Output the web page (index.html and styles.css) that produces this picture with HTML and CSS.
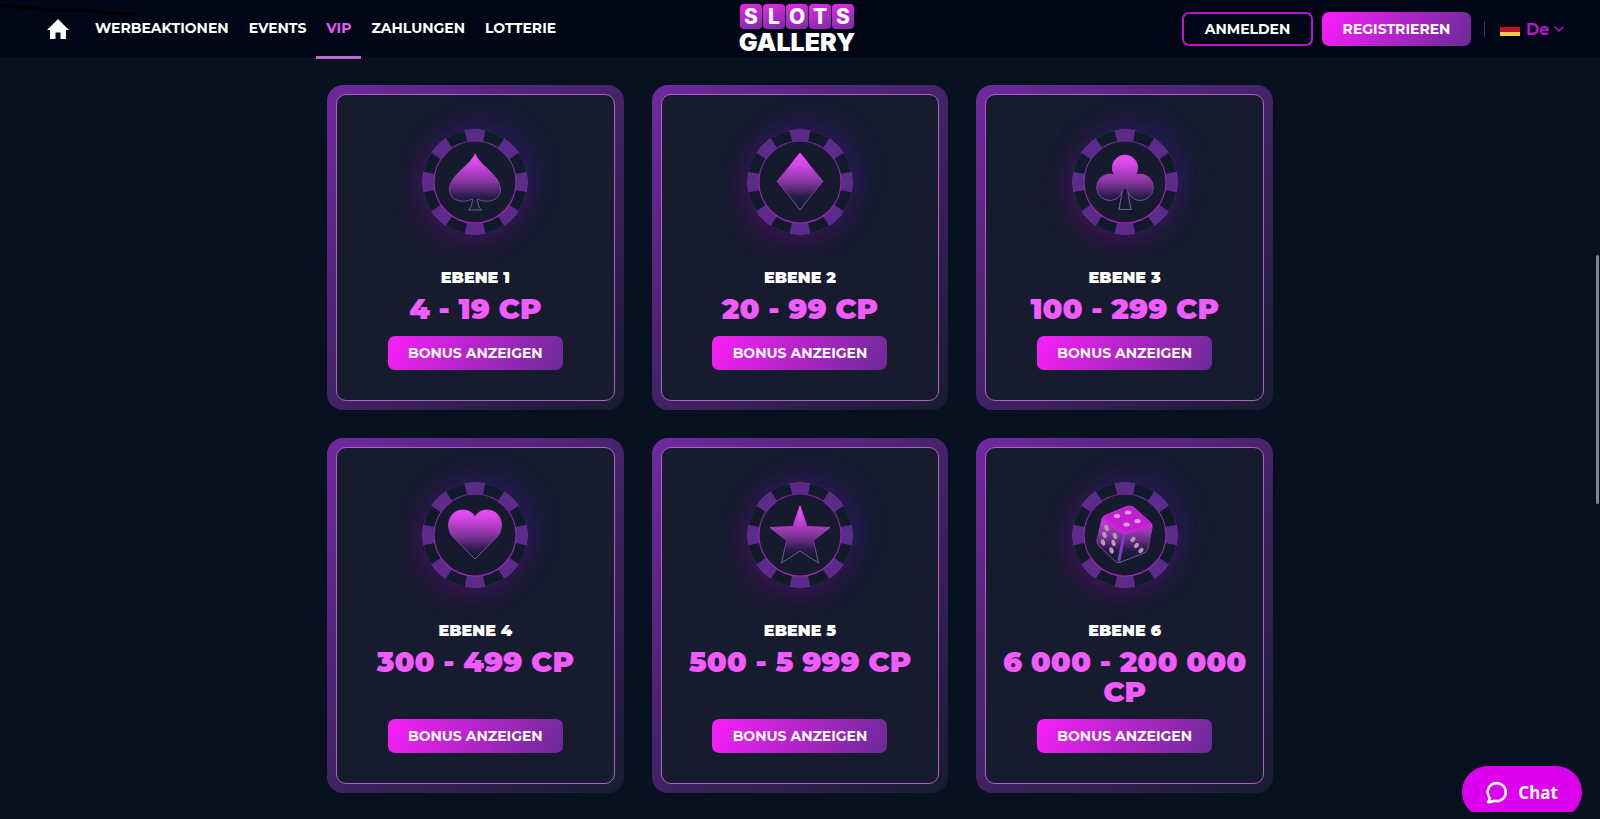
FILE: index.html
```
<!DOCTYPE html>
<html lang="de">
<head>
  <meta charset="UTF-8">
  <title>Slots Gallery - VIP</title>
  <meta name="viewport" content="width=device-width, initial-scale=1.0" />
  <link rel="stylesheet" href="styles.css">
</head>
<body>

  <!-- Shared SVG parts -->
  <svg class="sprite" aria-hidden="true">
    <defs>
      <linearGradient id="suit-fill" x1="0" y1="23" x2="0" y2="81" gradientUnits="userSpaceOnUse">
        <stop offset="0" stop-color="#f64dff" />
        <stop offset="0.2" stop-color="#d848e8" />
        <stop offset="0.5" stop-color="#8a36a3" />
        <stop offset="0.78" stop-color="#251b47" />
        <stop offset="0.9" stop-color="#161b2e" />
      </linearGradient>
      <linearGradient id="suit-line" x1="0" y1="23" x2="0" y2="81" gradientUnits="userSpaceOnUse">
        <stop offset="0" stop-color="#f04bff" />
        <stop offset="0.6" stop-color="#7a3a9c" />
        <stop offset="1" stop-color="#70609f" />
      </linearGradient>
      <linearGradient id="ring-line" x1="0" y1="12" x2="0" y2="94" gradientUnits="userSpaceOnUse">
        <stop offset="0" stop-color="#6a2a96" />
        <stop offset="1" stop-color="#b01fc0" />
      </linearGradient>
      <symbol id="chip" viewBox="0 0 106 106">
        <circle cx="53" cy="53" r="53" fill="#111a2b" />
        <circle cx="53" cy="53" r="47" fill="none" stroke="#5c2b8a" stroke-width="12" pathLength="16" stroke-dasharray="1 1" transform="rotate(-11.25 53 53)" />
        <circle cx="53" cy="53" r="52.5" fill="none" stroke="#6f3a9c" stroke-opacity="0.35" />
        <circle cx="53" cy="53" r="41" fill="#151b2d" stroke="url(#ring-line)" stroke-width="1.2" />
      </symbol>
    </defs>
  </svg>

  <header class="header">
    <svg class="header-mark" width="136" height="18" viewBox="0 0 136 18" aria-hidden="true">
      <path d="M0 3 C8 6 20 4 32 6 S60 9 78 8 S104 13 134 12" fill="none" stroke="#000" stroke-width="3" stroke-linecap="round" />
    </svg>

    <nav class="nav">
      <a href="#" class="nav-home" aria-label="Startseite">
        <svg width="22" height="20" viewBox="0 0 22 20"><path d="M11 0 L22 11 H19 V20 H13.500 V13.500 H8.500 V20 H3 V11 H0 Z" fill="#fff" /></svg>
      </a>
      <a href="#" class="nav-link">WERBEAKTIONEN</a>
      <a href="#" class="nav-link">EVENTS</a>
      <a href="#" class="nav-link active">VIP</a>
      <a href="#" class="nav-link">ZAHLUNGEN</a>
      <a href="#" class="nav-link">LOTTERIE</a>
    </nav>

    <a href="#" class="logo">
      <span class="logo-tiles"><span>S</span><span>L</span><span>O</span><span>T</span><span>S</span></span>
      <span class="logo-name">GALLERY</span>
    </a>

    <div class="account">
      <button type="button" class="button login-btn">ANMELDEN</button>
      <button type="button" class="button register-btn">REGISTRIEREN</button>
      <div class="language">
        <svg width="20" height="13" viewBox="0 0 20 13" aria-hidden="true">
          <rect width="20" height="5" fill="#0a0506" />
          <rect y="4" width="20" height="5" fill="#c8102a" />
          <rect y="9" width="20" height="4" fill="#f9c846" />
        </svg>
        <select class="language-select" aria-label="Sprache">
          <option>De</option>
        </select>
        <svg width="10" height="6" viewBox="0 0 10 6" aria-hidden="true"><path d="M0.500 0.500 L5 5 L9.500 0.500" fill="none" stroke="#b418c8" stroke-width="1.3" /></svg>
      </div>
    </div>
  </header>

  <main class="levels">
    <article class="card">
      <div class="card-body">
        <svg class="chip" viewBox="0 0 106 106" aria-hidden="true">
          <use href="#chip" />
          <path class="suit" d="M53 25 C57 36 78 46 78.500 60 C79 71 66 75 55.500 70 C55.500 75 57 79 59.500 81 H46.500 C49 79 50.500 75 50.500 70 C40 75 27 71 27.500 60 C28 46 49 36 53 25 Z" />
        </svg>
        <h3 class="card-level">EBENE 1</h3>
        <p class="card-points">4 - 19 CP</p>
        <button type="button" class="button bonus-btn">BONUS ANZEIGEN</button>
      </div>
    </article>

    <article class="card">
      <div class="card-body">
        <svg class="chip" viewBox="0 0 106 106" aria-hidden="true">
          <use href="#chip" />
          <path class="suit" d="M53 24 Q64 38 76 52.500 Q64 66 53 81 Q42 66 30 52.500 Q42 38 53 24 Z" />
        </svg>
        <h3 class="card-level">EBENE 2</h3>
        <p class="card-points">20 - 99 CP</p>
        <button type="button" class="button bonus-btn">BONUS ANZEIGEN</button>
      </div>
    </article>

    <article class="card">
      <div class="card-body">
        <svg class="chip" viewBox="0 0 106 106" aria-hidden="true">
          <use href="#chip" />
          <path class="suit" d="M42.500 46 A12.700 12.700 0 1 1 63.500 46 A13.200 13.200 0 1 1 55.500 62 L59 80.500 H47 L50.500 62 A13.200 13.200 0 1 1 42.500 46 Z" />
          <path class="suit stem" d="M51 59 H55 L59 80.500 H47 Z" />
        </svg>
        <h3 class="card-level">EBENE 3</h3>
        <p class="card-points">100 - 299 CP</p>
        <button type="button" class="button bonus-btn">BONUS ANZEIGEN</button>
      </div>
    </article>

    <article class="card">
      <div class="card-body">
        <svg class="chip" viewBox="0 0 106 106" aria-hidden="true">
          <use href="#chip" />
          <path class="suit" d="M53 35 C58 26 69 27 74 31 C81 37 81 48 75 55 L53 77 L31 55 C25 48 25 37 32 31 C37 27 48 26 53 35 Z" />
        </svg>
        <h3 class="card-level">EBENE 4</h3>
        <p class="card-points">300 - 499 CP</p>
        <button type="button" class="button bonus-btn">BONUS ANZEIGEN</button>
      </div>
    </article>

    <article class="card">
      <div class="card-body">
        <svg class="chip" viewBox="0 0 106 106" aria-hidden="true">
          <use href="#chip" />
          <path class="suit" d="M53 24 L60 44.500 L83 45.500 L66.500 58.500 L71.500 81 L53 69 L34.500 81 L39.500 58.500 L23 45.500 L46 44.500 Z" />
        </svg>
        <h3 class="card-level">EBENE 5</h3>
        <p class="card-points">500 - 5 999 CP</p>
        <button type="button" class="button bonus-btn">BONUS ANZEIGEN</button>
      </div>
    </article>

    <article class="card">
      <div class="card-body">
        <svg class="chip" viewBox="0 0 106 106" aria-hidden="true">
          <use href="#chip" />
          <path class="suit" d="M54 25 Q57 23 61 25 L77 39 Q81 42 80 46 L76 66 Q75 70 72 71 L49 80 Q46 82 43 79 L27 64 Q24 61 25 58 L30 37 Q31 34 34 33 Z" />
          <path d="M54 25 Q57 23 61 25 L77 39 Q80 42 77 43 L56 50 Q52 52 49 49 L32 38 Q29 35 34 33 Z" fill="#c31fce" />
          <path d="M31 37 L49 49 Q52 52 56 50 L79 43" fill="none" stroke="#c827d6" stroke-width="3" stroke-linejoin="round" />
          <path d="M52 53 L47 78" fill="none" stroke="#7a3fc4" stroke-width="3" stroke-linecap="round" />
          <g fill="#d9a2dc">
            <ellipse cx="45" cy="34" rx="3.200" ry="2" />
            <ellipse cx="56" cy="30.500" rx="3.200" ry="2" />
            <ellipse cx="65.500" cy="39" rx="3.200" ry="2" />
            <ellipse cx="54.500" cy="42.500" rx="3.200" ry="2" />
          </g>
          <g fill="#b79bbf">
            <ellipse cx="34.500" cy="46" rx="2" ry="3.200" transform="rotate(-20 34.500 46)" />
            <ellipse cx="32.500" cy="53" rx="2" ry="3.200" transform="rotate(-20 32.500 53)" />
            <ellipse cx="31" cy="60.500" rx="2" ry="3.200" transform="rotate(-20 31 60.500)" />
            <ellipse cx="43" cy="54" rx="2" ry="3.200" transform="rotate(-20 43 54)" />
            <ellipse cx="41.500" cy="61" rx="2" ry="3.200" transform="rotate(-20 41.500 61)" />
            <ellipse cx="39.500" cy="68.500" rx="2" ry="3.200" transform="rotate(-20 39.500 68.500)" />
            <ellipse cx="61" cy="57.500" rx="2" ry="3" transform="rotate(40 61 57.500)" />
            <ellipse cx="64.500" cy="63.500" rx="2" ry="3" transform="rotate(40 64.500 63.500)" />
            <ellipse cx="69" cy="68.500" rx="2" ry="3" transform="rotate(40 69 68.500)" />
          </g>
        </svg>
        <h3 class="card-level">EBENE 6</h3>
        <p class="card-points">6 000 - 200 000 CP</p>
        <button type="button" class="button bonus-btn">BONUS ANZEIGEN</button>
      </div>
    </article>
  </main>

  <div class="chat">
    <button type="button" class="chat-btn">
      <svg width="22" height="23" viewBox="0 0 22 23" aria-hidden="true"><path d="M3.500 16.500 A9 9 0 1 1 8 19.700 Q5 21.500 2 21 Q4 19.500 3.500 16.500 Z" fill="none" stroke="#fff" stroke-width="2.6" stroke-linejoin="round" /></svg>
      Chat
    </button>
  </div>

  <div class="scroll-thumb"></div>

</body>
</html>
```
FILE: styles.css
```
* {
  box-sizing: border-box;
}

body {
  margin: 0;
  min-height: 100vh;
  font-family: Montserrat, Inter, sans-serif;
  background-color: #07111f;
  color: #fff;
}

a {
  color: inherit;
  text-decoration: none;
}

.sprite {
  position: absolute;
  width: 0;
  height: 0;
}

/* Header */
.header {
  position: relative;
  display: grid;
  grid-template-columns: 1fr auto 1fr;
  align-items: center;
  height: 58px;
  padding: 0 36px 0 30px;
  background-color: #000615;
}

.header-mark {
  position: absolute;
  top: 2px;
  left: 0;
}

.nav {
  display: flex;
  align-items: center;
  height: 58px;
}

.nav-home {
  display: flex;
  padding: 0 16px 0 17px;
}

.nav-link {
  display: flex;
  align-items: center;
  height: 60px;
  padding: 0 10px;
  border-bottom: 3px solid transparent;
  border-top: 1px solid transparent;
  font-size: 14px;
  font-weight: 700;
}

.nav-link.active {
  color: #e65cf5;
  border-bottom-color: #c566d0;
}

.logo {
  display: flex;
  flex-direction: column;
  align-items: center;
  padding-top: 2px;
  font-family: Inter, sans-serif;
}

.logo-tiles {
  display: flex;
  gap: 1px;
}

.logo-tiles span {
  width: 22px;
  height: 25px;
  border-radius: 4px;
  background: linear-gradient(160deg, #e62be6, #7a2aa6);
  font-size: 21px;
  line-height: 25px;
  font-weight: 800;
  text-align: center;
}

.logo-name {
  font-size: 25px;
  line-height: 27px;
  font-weight: 900;
}

.account {
  display: flex;
  align-items: center;
  justify-content: flex-end;
}

.button {
  height: 34px;
  padding: 0 20px;
  border: none;
  border-radius: 7px;
  background: linear-gradient(120deg, #fa1ffa, #6a2a96);
  color: #fff;
  font-family: inherit;
  font-size: 14px;
  font-weight: 700;
  cursor: pointer;
}

.login-btn {
  min-width: 131px;
  margin-right: 9px;
  border: 2px solid #b418c8;
  background: none;
}

.register-btn {
  min-width: 149px;
}

.language {
  display: flex;
  align-items: center;
  margin-left: 13px;
}

.language::before {
  content: "";
  width: 1px;
  height: 16px;
  margin-right: 15px;
  background-color: #3a3f50;
}

.language-select {
  appearance: none;
  margin: 0 4px 0 6px;
  padding: 0;
  border: none;
  background: none;
  color: #b418c8;
  font-family: inherit;
  font-size: 16px;
  font-weight: 700;
}

/* VIP levels */
.levels {
  display: grid;
  grid-template-columns: repeat(3, 1fr);
  gap: 28px;
  max-width: 946px;
  margin: 27px auto 0;
}

.card {
  display: flex;
  padding: 9px;
  border-radius: 16px;
  background: linear-gradient(135deg, #7029a0, #171c2f);
}

.card-body {
  display: flex;
  flex-direction: column;
  align-items: center;
  width: 100%;
  padding: 34px 12px 30px;
  border: 1px solid #b05fc4;
  border-radius: 10px;
  background-color: #161b2e;
}

.chip {
  width: 106px;
  height: 106px;
  border-radius: 50%;
  box-shadow: -6px 8px 28px rgba(170, 0, 170, 0.25), 8px -8px 30px rgba(70, 30, 200, 0.25);
}

.suit {
  fill: url(#suit-fill);
  stroke: url(#suit-line);
  stroke-width: 1;
  stroke-linejoin: round;
}

.stem {
  fill: #161b2e;
}

.card-level {
  margin: 33px 0 0;
  font-size: 16px;
  line-height: 20px;
  font-weight: 900;
}

.card-points {
  margin: 6px 0 12px;
  color: #f25cff;
  font-size: 29px;
  line-height: 30px;
  font-weight: 900;
  text-align: center;
}

.bonus-btn {
  min-width: 175px;
  margin-top: auto;
}

/* Chat widget, cut off at its lower edge */
.chat {
  position: fixed;
  right: 18px;
  bottom: 7px;
  height: 46px;
  overflow: hidden;
}

.chat-btn {
  display: flex;
  align-items: center;
  justify-content: center;
  gap: 10px;
  width: 120px;
  height: 52px;
  border: none;
  border-radius: 26px;
  background-color: #dc00ee;
  color: #fff;
  font-family: "Noto Sans", sans-serif;
  font-size: 17px;
  font-weight: 700;
  cursor: pointer;
}

.scroll-thumb {
  position: fixed;
  top: 255px;
  right: 1px;
  width: 3px;
  height: 249px;
  border-radius: 2px;
  background-color: #85878e;
}
```
